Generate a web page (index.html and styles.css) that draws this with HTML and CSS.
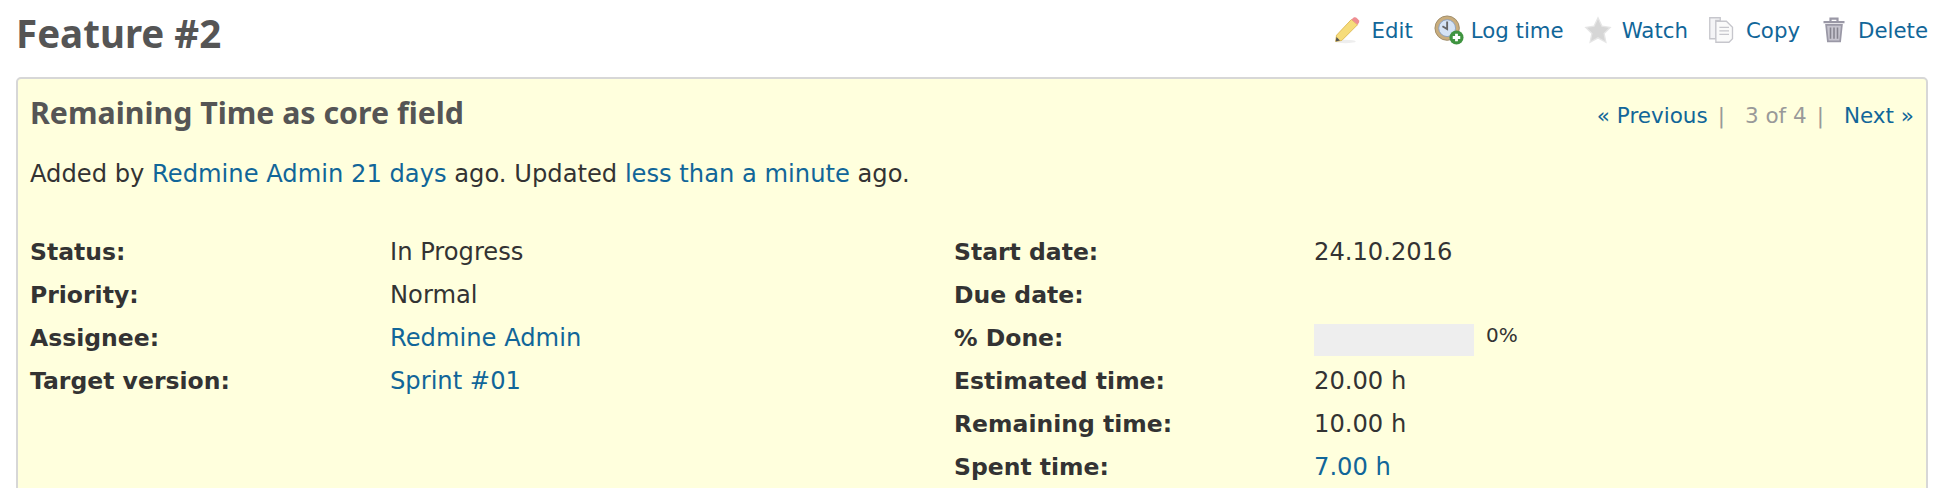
FILE: index.html
```html
<!DOCTYPE html>
<html lang="en">
<head>
  <meta charset="UTF-8">
  <title>Feature #2</title>
  <link rel="stylesheet" href="styles.css">
</head>
<body>

  <!-- Header -->
  <div class="header">
    <h2>Feature #2</h2>
    <div class="contextual">
      <a href="#">
        <svg class="icon" viewBox="0 0 32 32"><ellipse cx="14" cy="29" rx="12" ry="2" fill="#eee"/><path d="M4 22 L21 4 L28 10 L10 28 L3 29 Z" fill="#f6dc7a" stroke="#dcb64e"/><path d="M21 4 L24 1.500 Q26 1 28 3 L30 5.500 Q30.500 7 28 10 Z" fill="#ee8d92"/><path d="M4 24 L3 29 L8 28 Z" fill="#555"/></svg>
        Edit
      </a>
      <a href="#" class="tight">
        <svg class="icon icon-wide" viewBox="0 0 32 32"><circle cx="14" cy="14" r="13" fill="#c9ad7d" stroke="#9c8a68"/><circle cx="14" cy="14" r="9" fill="#d5e3f5" stroke="#8aa0c0"/><path d="M14 7 V15 L9 12" fill="none" stroke="#666" stroke-width="2"/><circle cx="24" cy="24" r="7.500" fill="#3f9440"/><path d="M24 20 V28 M20 24 H28" stroke="#fff" stroke-width="3"/></svg>
        Log time
      </a>
      <a href="#">
        <svg class="icon" viewBox="0 0 32 32"><path d="M16 2 L20.500 11.500 L30 13 L23 20 L25 30 L16 25 L7 30 L9 20 L2 13 L11.500 11.500 Z" fill="#d6d6d6" stroke="#e6e6e6" stroke-width="1.500"/></svg>
        Watch
      </a>
      <a href="#">
        <svg class="icon" viewBox="0 0 32 32"><path d="M2 2 H14 V5 H9 V26 H2 Z" fill="#f4f4f6" stroke="#c6c6cc" stroke-width="1.500"/><path d="M9 6 H21 L28 13 V26 L24 30 H9 Z" fill="#fafafa" stroke="#c6c6cc" stroke-width="1.500"/><path d="M13 13 H24 M13 17 H24 M13 21 H24" stroke="#c6c6cc" stroke-width="1.500"/></svg>
        Copy
      </a>
      <a href="#">
        <svg class="icon" viewBox="0 0 32 32"><path d="M4 7 H28 M12 6 V3 H20 V6" fill="none" stroke="#9a98a6" stroke-width="2.500"/><path d="M7 10 H25 L23 29 H9 Z" fill="#c6c4ce" stroke="#9a98a6" stroke-width="2"/><path d="M12 13 V26 M16 13 V26 M20 13 V26" stroke="#86848f" stroke-width="1.800"/></svg>
        Delete
      </a>
    </div>
  </div>

  <!-- Issue -->
  <div class="issue">
    <div class="next-prev">
      <a href="#">« Previous</a><span class="sep">|</span><span class="position">3 of 4</span><span class="sep">|</span><a href="#">Next »</a>
    </div>
    <h3>Remaining Time as core field</h3>
    <p class="author">Added by <a href="#">Redmine Admin</a> <a href="#">21 days</a> ago. Updated <a href="#">less than a minute</a> ago.</p>

    <div class="attributes">
      <div class="attr-col">
        <div class="attr"><span class="label">Status:</span><span>In Progress</span></div>
        <div class="attr"><span class="label">Priority:</span><span>Normal</span></div>
        <div class="attr"><span class="label">Assignee:</span><a href="#">Redmine Admin</a></div>
        <div class="attr"><span class="label">Target version:</span><a href="#">Sprint #01</a></div>
      </div>
      <div class="attr-col">
        <div class="attr"><span class="label">Start date:</span><span>24.10.2016</span></div>
        <div class="attr"><span class="label">Due date:</span><span></span></div>
        <div class="attr"><span class="label">% Done:</span><span class="progress"><span class="bar"></span><span class="pct">0%</span></span></div>
        <div class="attr"><span class="label">Estimated time:</span><span>20.00 h</span></div>
        <div class="attr"><span class="label">Remaining time:</span><span>10.00 h</span></div>
        <div class="attr"><span class="label">Spent time:</span><a href="#">7.00 h</a></div>
      </div>
    </div>
  </div>

</body>
</html>
```

FILE: styles.css
```css
html, body {
  height: 100%;
}

body {
  margin: 0;
  padding: 0 10px 0 16px;
  overflow: hidden;
  background: #fff;
  color: #333;
  font-family: "DejaVu Sans", sans-serif;
  font-size: 24.2px;
}

a {
  color: #169;
  text-decoration: none;
}

.header {
  display: flex;
  justify-content: space-between;
  height: 77px;
}

h2 {
  margin: 9px 0 0 0;
  color: #555;
  font-family: "Noto Sans", sans-serif;
  font-size: 38.5px;
  line-height: 48px;
  font-weight: bold;
}

.contextual {
  display: flex;
  align-items: center;
  gap: 20px;
  height: 60px;
  font-size: 21.3px;
}

.contextual a {
  display: flex;
  align-items: center;
  gap: 10px;
}

.contextual a.tight {
  gap: 6px;
}

.icon {
  width: 28px;
  height: 30px;
}

.icon-wide {
  width: 32px;
}

.issue {
  position: relative;
  height: 500px;
  box-sizing: border-box;
  padding: 14px 12px;
  background: #ffd;
  border: 2px solid #d7d7d7;
  border-radius: 5px;
}

.next-prev {
  position: absolute;
  top: 24px;
  right: 12px;
  display: flex;
  font-size: 21.5px;
}

.position, .sep {
  color: #999;
}

.sep {
  margin: 0 20px 0 10px;
}

h3 {
  margin: 0;
  color: #555;
  font-family: "Noto Sans", sans-serif;
  font-size: 30.3px;
  line-height: 40px;
  font-weight: bold;
}

.author {
  margin: 26px 0 0 0;
  line-height: 30px;
}

.attributes {
  display: flex;
  margin-top: 41px;
}

.attr-col {
  width: 924px;
}

.attr {
  display: flex;
  align-items: center;
  height: 43px;
}

.label {
  width: 360px;
  font-size: 23.5px;
  font-weight: bold;
}

.progress {
  display: flex;
  align-items: center;
  gap: 12px;
}

.bar {
  width: 160px;
  height: 32px;
  margin-top: 4px;
  background: #eee;
}

.pct {
  margin-top: -6px;
  font-size: 20px;
}
```
